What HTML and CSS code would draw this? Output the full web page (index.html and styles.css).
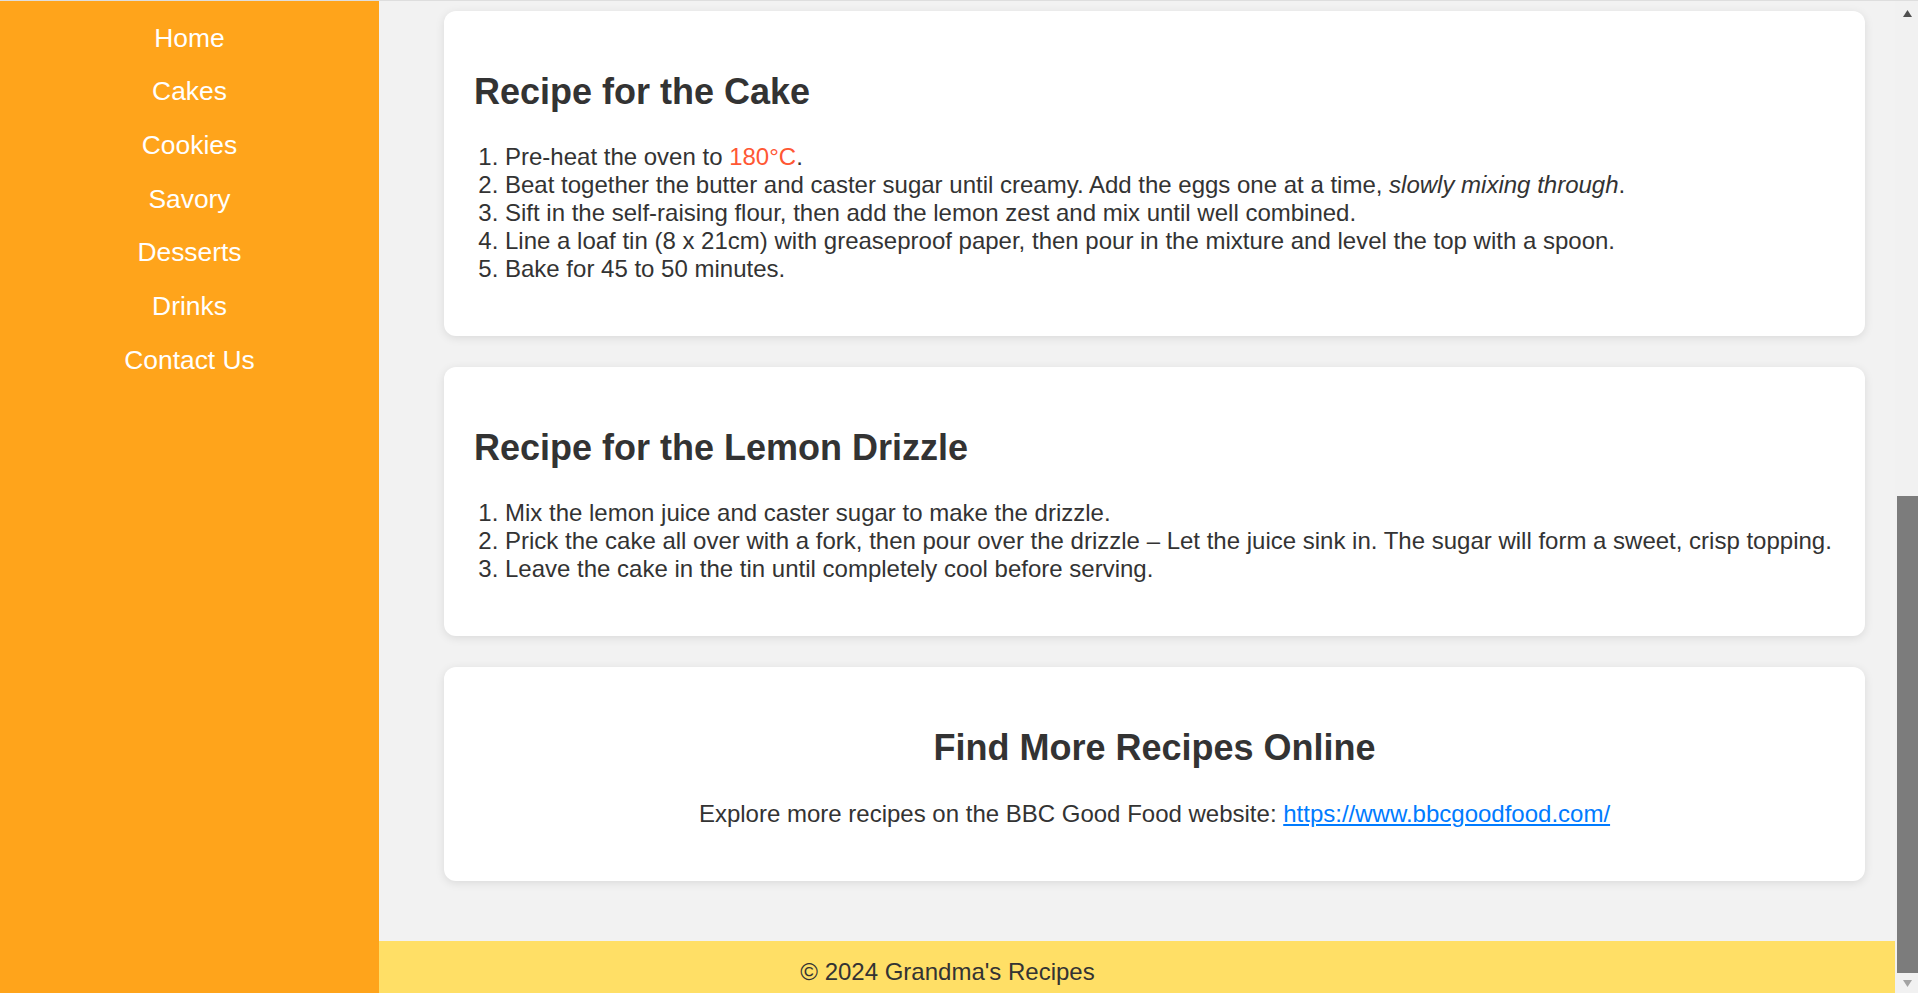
FILE: index.html
```html
<!DOCTYPE html>
<html lang="en">
<head>
<meta charset="utf-8">
<title>Grandma's Recipes</title>
<link rel="stylesheet" href="styles.css">
</head>
<body>
<div class="topline"></div>
<div class="window">
  <div class="viewport">
    <aside class="sidebar">
      <nav>
        <ul class="nav">
          <li><a href="#">Home</a></li>
          <li><a href="#">Cakes</a></li>
          <li><a href="#">Cookies</a></li>
          <li><a href="#">Savory</a></li>
          <li><a href="#">Desserts</a></li>
          <li><a href="#">Drinks</a></li>
          <li><a href="#">Contact Us</a></li>
        </ul>
      </nav>
    </aside>
    <main class="main">
      <section class="card">
        <h2>Recipe for the Cake</h2>
        <ol>
          <li>Pre-heat the oven to <span class="temp">180°C</span>.</li>
          <li>Beat together the butter and caster sugar until creamy. Add the eggs one at a time, <em>slowly mixing through</em>.</li>
          <li>Sift in the self-raising flour, then add the lemon zest and mix until well combined.</li>
          <li>Line a loaf tin (8 x 21cm) with greaseproof paper, then pour in the mixture and level the top with a spoon.</li>
          <li>Bake for 45 to 50 minutes.</li>
        </ol>
      </section>
      <section class="card">
        <h2>Recipe for the Lemon Drizzle</h2>
        <ol>
          <li>Mix the lemon juice and caster sugar to make the drizzle.</li>
          <li>Prick the cake all over with a fork, then pour over the drizzle – Let the juice sink in. The sugar will form a sweet, crisp topping.</li>
          <li>Leave the cake in the tin until completely cool before serving.</li>
        </ol>
      </section>
      <section class="card card-center">
        <h2>Find More Recipes Online</h2>
        <p>Explore more recipes on the BBC Good Food website: <a class="link" href="#">https://www.bbcgoodfood.com/</a></p>
      </section>
    </main>
    <footer class="footer">
      <p>© 2024 Grandma's Recipes</p>
    </footer>
  </div>
  <div class="scrollbar">
    <div class="sb-btn sb-up">
      <svg width="9" height="7" viewBox="0 0 9 7"><polygon points="4.5,0 9,7 0,7" fill="#505050"/></svg>
    </div>
    <div class="sb-track"><div class="sb-thumb"></div></div>
    <div class="sb-btn sb-down">
      <svg width="9" height="7" viewBox="0 0 9 7"><polygon points="0,0 9,0 4.5,7" fill="#a3a3a3"/></svg>
    </div>
  </div>
</div>
</body>
</html>
```
FILE: styles.css
```css
html, body {
  margin: 0;
  padding: 0;
}

body {
  height: 100vh;
  overflow: hidden;
  display: flex;
  flex-direction: column;
  font-family: "Liberation Sans", Arial, sans-serif;
  font-size: 24px;
  color: #333;
  background: #f2f2f2;
}

.topline {
  flex: none;
  height: 1px;
  background: #dedede;
}

.window {
  flex: 1;
  display: flex;
  min-height: 0;
}

.viewport {
  flex: 1;
  position: relative;
  overflow: hidden;
}

.sidebar {
  position: absolute;
  top: 0;
  left: 0;
  bottom: 0;
  width: 379px;
  background: #ffa41b;
  z-index: 2;
}

.nav {
  list-style: none;
  margin: 0;
  padding: 10px 0 0;
  text-align: center;
}

.nav a {
  display: block;
  padding: 11.7px 0;
  color: #fff;
  text-decoration: none;
  font-size: 26.4px;
  line-height: 30.3px;
}

.main {
  margin-left: 379px;
  padding: 10px 30px 60px 65px;
  display: flex;
  flex-direction: column;
  gap: 31px;
}

.card {
  background: #fff;
  border-radius: 12px;
  box-shadow: 0 2px 10px rgba(0, 0, 0, 0.1);
  padding: 30px 30px 29px;
}

.card h2 {
  font-size: 36px;
  line-height: 41px;
  font-weight: bold;
  margin: 30px 0 31px;
}

.card ol {
  margin: 31px 0 24px;
  padding-left: 31px;
  line-height: 28px;
}

.temp {
  color: #ff5733;
}

.card-center {
  text-align: center;
}

.card-center p {
  margin: 32px 0 24px;
  line-height: 28px;
}

.link {
  color: #007bff;
  text-decoration: underline;
}

.footer {
  background: #ffdf66;
  text-align: center;
  padding: 17px 0 13px;
}

.footer p {
  margin: 0;
  line-height: 28px;
}

.scrollbar {
  flex: none;
  width: 23px;
  background: #f1f1f1;
  display: flex;
  flex-direction: column;
}

.sb-btn {
  flex: none;
  display: flex;
  align-items: center;
  justify-content: center;
  padding-left: 2px;
}

.sb-up {
  height: 24px;
}

.sb-down {
  height: 20px;
}

.sb-track {
  flex: 1;
  display: flex;
  flex-direction: column;
  justify-content: flex-end;
  padding-left: 2px;
}

.sb-thumb {
  height: 477px;
  background: #7c7c7c;
}
```
